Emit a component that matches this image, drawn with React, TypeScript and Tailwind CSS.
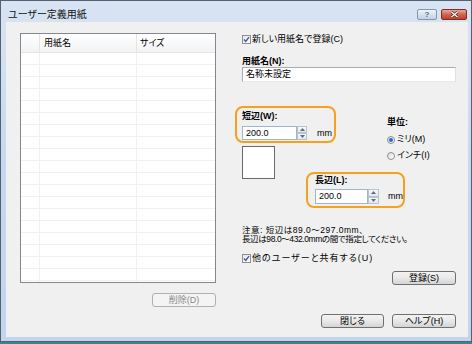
import React from "react";

function CheckBox() {
  return (
    <span className="w-[9px] h-[9px] border border-[#8e8f8f] bg-gradient-to-br from-[#e4e4e4] to-white flex items-center justify-center shrink-0">
      <svg width="7" height="7" viewBox="0 0 7 7">
        <path d="M1 3.6 L2.8 5.4 L6 1.2" fill="none" stroke="#3b5aa8" strokeWidth="1.4" />
      </svg>
    </span>
  );
}

function Radio({ checked }: { checked?: boolean }) {
  return (
    <span className="w-[8px] h-[8px] rounded-full border border-[#8e8f8f] bg-gradient-to-br from-[#dcdcdc] to-white flex items-center justify-center shrink-0">
      {checked && <span className="w-[4px] h-[4px] rounded-full bg-[#1f6fd0]" />}
    </span>
  );
}

function Spinner({ w, h }: { w: number; h: number }) {
  return (
    <div className="flex flex-col" style={{ width: w, height: h }}>
      {[0, 1].map((i) => (
        <div
          key={i}
          className="flex-1 border border-[#b9c3cf] bg-gradient-to-b from-[#f7f8fa] to-[#e3e7ec] flex items-center justify-center"
        >
          <svg width="5" height="3" viewBox="0 0 5 3">
            <path d={i === 0 ? "M2.5 0 L5 3 L0 3 Z" : "M0 0 L5 0 L2.5 3 Z"} fill="#5d6d82" />
          </svg>
        </div>
      ))}
    </div>
  );
}

function Button({ label, className = "", disabled }: { label: string; className?: string; disabled?: boolean }) {
  return (
    <div
      className={
        "h-[14px] rounded-[3px] border flex items-center justify-center text-[9px] leading-none " +
        (disabled
          ? "border-[#adb2b5] bg-[#f4f4f4] text-[#8a8a8a] "
          : "border-[#707070] bg-gradient-to-b from-[#f3f3f3] via-[#e9e9e9] to-[#d4d4d4] text-black ") +
        className
      }
    >
      {label}
    </div>
  );
}

export default function App() {
  const rows = Array.from({ length: 20 });
  return (
    <div className="w-[472px] h-[344px] bg-[#2c8a93] font-['Liberation_Sans','Noto_Sans_CJK_JP',sans-serif] [font-feature-settings:'palt'] text-black">
      <div className="w-[472px] h-[342px] border border-[#56616e] bg-gradient-to-b from-[#d8e4f3] via-[#c5d8ef] to-[#c1d5ed] pl-[5px] pr-[3px] pb-[4px] flex flex-col">
        {/* title bar */}
        <div className="h-[21px] pt-[6px] flex items-center">
          <span className="pl-[2px] text-[10px] leading-[12px] text-[#111]">ユーザー定義用紙</span>
          <div className="ml-auto mr-[1px] flex gap-[4px]">
            <div className="w-[20px] h-[11px] rounded-[2px] border border-[#8396ae] bg-gradient-to-b from-[#eef3f9] to-[#c3d1e3] flex items-center justify-center text-[8px] leading-none font-bold text-[#5b6e87]">
              ?
            </div>
            <div className="w-[26px] h-[11px] rounded-[2px] border border-[#7b2f27] bg-gradient-to-b from-[#e9a796] via-[#d3644f] to-[#c0402b] flex items-center justify-center">
              <svg width="9" height="7" viewBox="0 0 9 7">
                <path d="M1.5 1 L7.5 6 M7.5 1 L1.5 6" stroke="#4a1a14" strokeWidth="2.6" />
                <path d="M1.5 1 L7.5 6 M7.5 1 L1.5 6" stroke="#ffffff" strokeWidth="1.4" />
              </svg>
            </div>
          </div>
        </div>

        {/* content */}
        <div className="h-[315px] bg-[#f0f0f0] flex">
          {/* left column */}
          <div className="w-[210px] pl-[14px] pt-[11px] flex flex-col">
            <div className="w-[196px] h-[250px] border border-[#828790] bg-white overflow-hidden">
              <div className="h-[19px] flex border-b border-[#e5e5e5] bg-gradient-to-b from-white to-[#f2f3f4] text-[9px] leading-none">
                <div className="w-[19px] border-r border-[#e3e4e6]" />
                <div className="w-[97px] border-r border-[#e3e4e6] pl-[4px] flex items-center">用紙名</div>
                <div className="flex-1 pl-[3px] flex items-center">サイズ</div>
              </div>
              {rows.map((_, i) => (
                <div key={i} className="h-[12px] flex border-b border-[#f1f1f1]">
                  <div className="w-[19px] border-r border-[#f1f1f1]" />
                  <div className="w-[97px] border-r border-[#f1f1f1]" />
                  <div className="flex-1" />
                </div>
              ))}
            </div>
            <Button label="削除(D)" disabled className="mt-[10px] self-end w-[64px]" />
          </div>

          {/* right column */}
          <div className="w-[214px] ml-[26px] pt-[12px] flex flex-col text-[9px]">
            <div className="h-[11px] flex items-center gap-[1px]">
              <CheckBox />
              <span className="leading-none">新しい用紙名で登録(C)</span>
            </div>
            <div className="mt-[11px] leading-[11px] font-bold">用紙名(N):</div>
            <div className="h-[15px] border border-[#abadb3] border-r-[#dbdfe6] border-b-[#e3e9ef] bg-white pl-[3px] flex items-center leading-none">
              名称未設定
            </div>

            <div className="mt-[24px] flex items-start">
              <div className="-ml-[7px] w-[101px] h-[37px] border-2 border-[#f5a11d] rounded-[8px] pl-[5px] pt-[3px]">
                <div className="leading-[11px] font-bold">短辺(W):</div>
                <div className="mt-[4px] flex items-center">
                  <div className="w-[55px] h-[14px] border border-[#9fb6d3] bg-white pl-[3px] flex items-center leading-none">
                    200.0
                  </div>
                  <Spinner w={10} h={14} />
                  <span className="ml-[10px] leading-none">mm</span>
                </div>
              </div>
              <div className="ml-[51px] mt-[11px] mb-[-19px] flex flex-col">
                <div className="leading-[11px] font-bold">単位:</div>
                <div className="mt-[6px] h-[11px] flex items-center gap-[2px]">
                  <Radio checked />
                  <span className="leading-none">ミリ(M)</span>
                </div>
                <div className="mt-[5px] h-[11px] flex items-center gap-[2px]">
                  <Radio />
                  <span className="leading-none">インチ(I)</span>
                </div>
              </div>
            </div>

            <div className="mt-[3px] flex items-start">
              <div className="w-[33px] h-[33px] border border-[#6a6a6a] bg-white" />
              <div className="ml-[31px] mt-[26px] w-[99px] h-[36px] border-2 border-[#f5a11d] rounded-[8px] pl-[7px] pt-[1px]">
                <div className="leading-[11px] font-bold">長辺(L):</div>
                <div className="mt-[3px] flex items-center">
                  <div className="w-[55px] h-[15px] border border-[#9fb6d3] bg-white pl-[3px] flex items-center leading-none">
                    200.0
                  </div>
                  <Spinner w={11} h={15} />
                  <span className="ml-[9px] leading-none">mm</span>
                </div>
              </div>
            </div>

            <div className="mt-[18px] leading-[9px] text-[8.5px] whitespace-nowrap">
              <div className="tracking-[0.5px]">注意: 短辺は89.0～297.0mm、</div>
              <div className="tracking-[-0.4px]">長辺は98.0～432.0mmの間で指定してください。</div>
            </div>

            <div className="mt-[9px] h-[11px] flex items-center gap-[1px]">
              <CheckBox />
              <span className="leading-none tracking-[1px]">他のユーザーと共有する(U)</span>
            </div>

            <Button label="登録(S)" className="mt-[7px] self-end w-[64px]" />

            <div className="mt-[29px] self-end flex gap-[8px]">
              <Button label="閉じる" className="w-[63px]" />
              <Button label="ヘルプ(H)" className="w-[64px]" />
            </div>
          </div>
        </div>
      </div>
    </div>
  );
}
